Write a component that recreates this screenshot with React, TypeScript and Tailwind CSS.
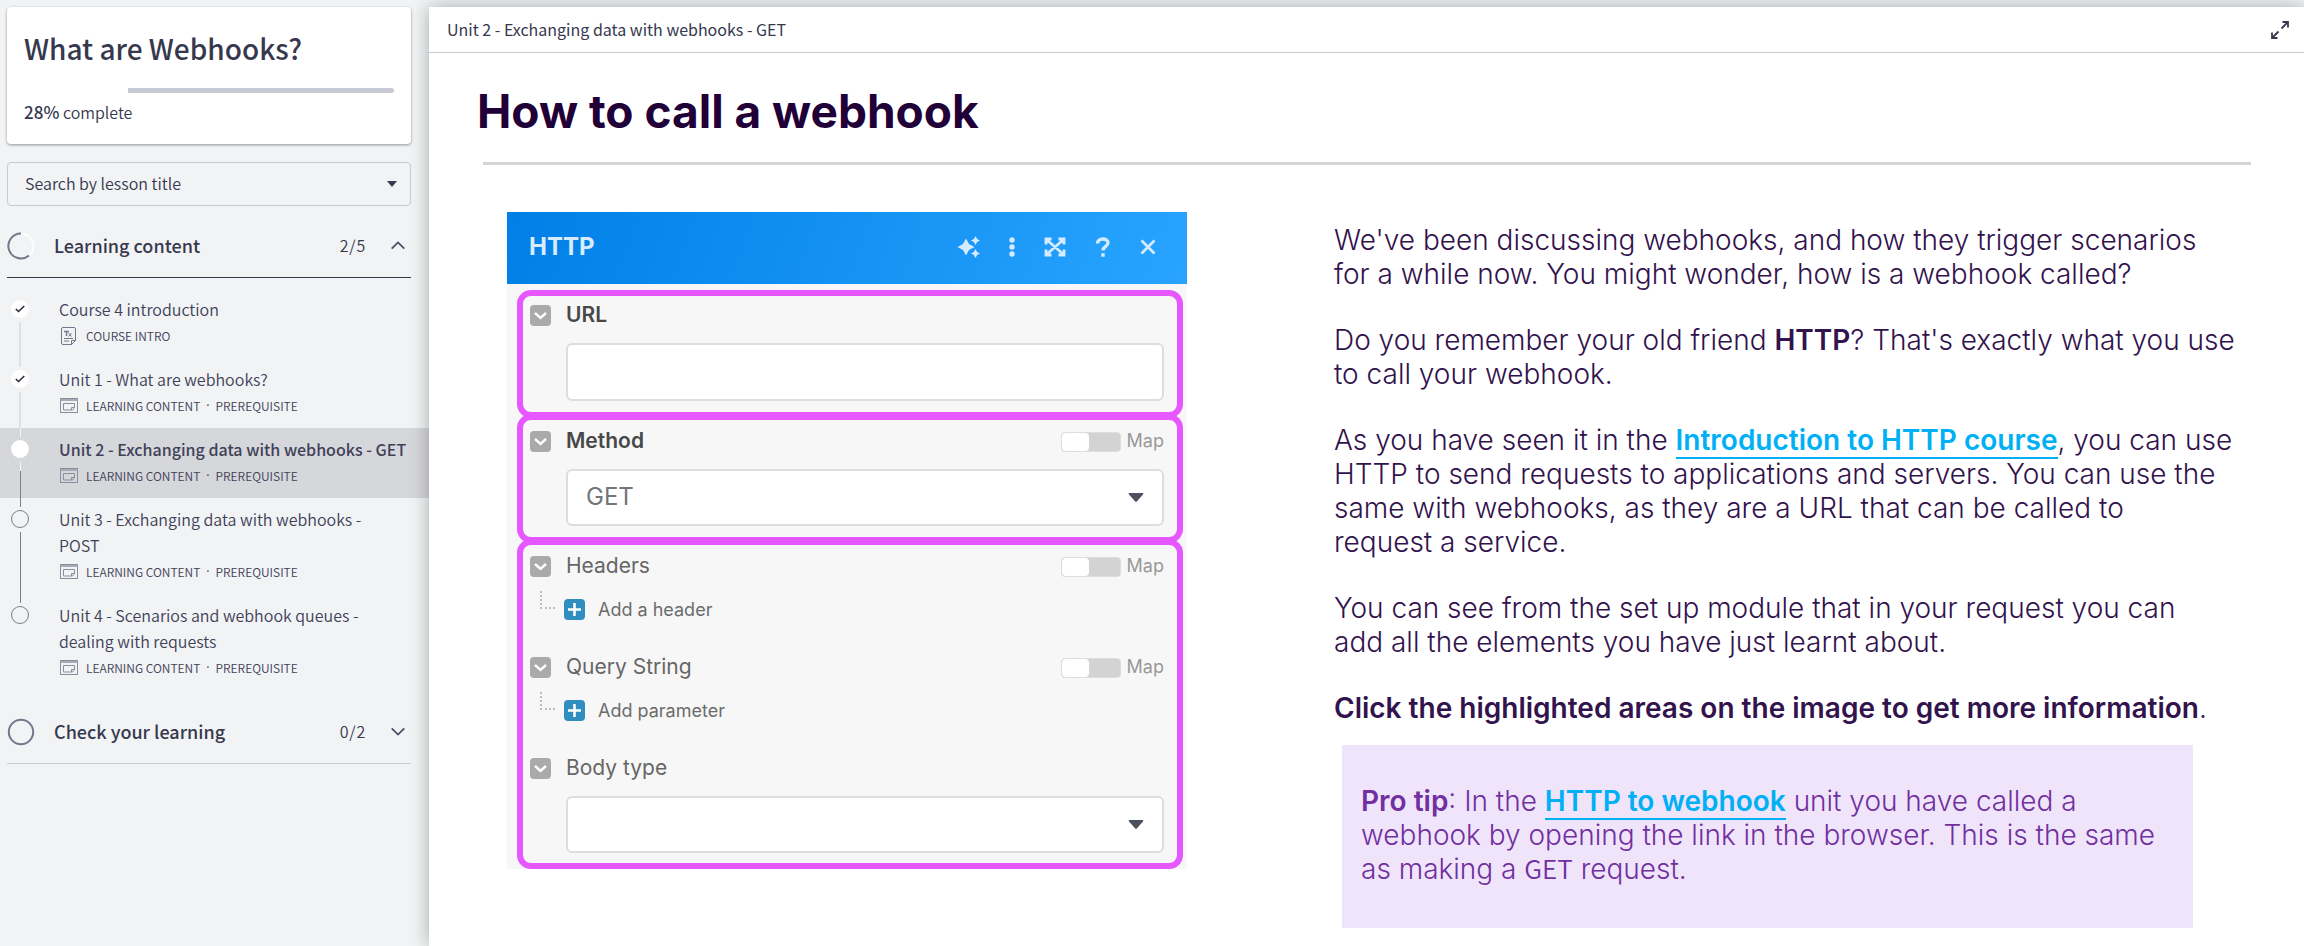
import React from "react";
import { clsx } from "clsx";

const sans = "font-['Noto_Sans_CJK_SC',sans-serif]";

type LessonState = "done" | "current" | "todo";

interface Lesson {
  title: string;
  tags: string[];
  icon: "text" | "slides";
  state: LessonState;
}

const lessons: Lesson[] = [
  { title: "Course 4 introduction", tags: ["COURSE INTRO"], icon: "text", state: "done" },
  { title: "Unit 1 - What are webhooks?", tags: ["LEARNING CONTENT", "PREREQUISITE"], icon: "slides", state: "done" },
  { title: "Unit 2 - Exchanging data with webhooks - GET", tags: ["LEARNING CONTENT", "PREREQUISITE"], icon: "slides", state: "current" },
  { title: "Unit 3 - Exchanging data with webhooks - POST", tags: ["LEARNING CONTENT", "PREREQUISITE"], icon: "slides", state: "todo" },
  { title: "Unit 4 - Scenarios and webhook queues - dealing with requests", tags: ["LEARNING CONTENT", "PREREQUISITE"], icon: "slides", state: "todo" },
];

function TextDocIcon() {
  return (
    <svg width="20" height="20" viewBox="0 0 20 20" fill="none" stroke="#74768b" aria-hidden="true">
      <path d="M4 1.500h11A1.500 1.500 0 0 1 16.500 3v11.500L12.500 18.500H4A1.500 1.500 0 0 1 2.500 17V3A1.500 1.500 0 0 1 4 1.500Z" />
      <path d="M12.500 18.500v-4h4M5 12.500h9M5 15h5" />
      <path d="M5 5.500h5M7.500 5.500V10" strokeWidth="1.400" />
      <path d="M9.500 7l3 3.500M12.500 7l-3 3.500" />
    </svg>
  );
}

function SlidesIcon() {
  return (
    <svg width="20" height="18" viewBox="0 0 20 18" fill="none" stroke="#8b8c9c" aria-hidden="true">
      <rect x="1.500" y="1.500" width="17" height="14" />
      <path d="M1.500 3h17" strokeWidth="2" stroke="#a9aab6" />
      <path d="M4.500 6.500h11v4l-2 2.500h-9ZM12.500 13v-2.500h3" />
    </svg>
  );
}

function Marker({ state }: { state: LessonState }) {
  if (state === "todo") {
    return <span className="size-[18px] shrink-0 rounded-full border border-[#7c7e90]" />;
  }
  return (
    <span className="flex size-[18px] shrink-0 items-center justify-center rounded-full bg-white">
      {state === "done" && (
        <svg width="10" height="8" viewBox="0 0 10 8" fill="none" stroke="#2b2c3a" strokeWidth="1.600" aria-hidden="true">
          <path d="M0.800 4L3.500 6.500L9.300 1" />
        </svg>
      )}
    </span>
  );
}

function LessonRow({ lesson, first, last }: { lesson: Lesson; first: boolean; last: boolean }) {
  const current = lesson.state === "current";
  return (
    <li className={clsx("flex", current && "bg-[#d6d7db]")}>
      <div className="ml-[10px] flex w-5 shrink-0 flex-col items-center">
        <span
          className={clsx(
            "h-[9px]",
            first ? "w-0" : lesson.state === "todo" ? "w-px bg-[#7c7e90]" : current ? "w-px bg-[#f4f4f6]" : "w-[2px] bg-[#dfe0e3]",
          )}
        />
        <span className="h-[3px]" />
        <Marker state={lesson.state} />
        <span className="h-1 shrink-0" />
        {current && <span className="h-[9px] w-px bg-[#f4f4f6]" />}
        <span className={clsx("flex-1", last ? "w-0" : lesson.state === "done" ? "w-[2px] bg-[#dfe0e3]" : "w-px bg-[#7c7e90]")} />
      </div>
      <a href="#lesson" className="block flex-1 pb-2 pl-[29px] pr-4 pt-2">
        <span className={clsx("block text-base leading-[26px] text-[#3f4158]", current ? "font-medium" : "font-[350]", lesson.state === "todo" && "pr-9")}>
          {lesson.title}
        </span>
        <span className="flex h-7 items-center text-xs text-[#3f4158]">
          {lesson.icon === "text" ? <TextDocIcon /> : <SlidesIcon />}
          {lesson.tags.map((tag, i) => (
            <React.Fragment key={tag}>
              {i > 0 && <span className="ml-[6px] -mr-[1px] font-['Noto_Sans',sans-serif]">·</span>}
              <span className="ml-[7px] font-[350]">{tag}</span>
            </React.Fragment>
          ))}
        </span>
      </a>
    </li>
  );
}

function SectionHeader({ title, count, open }: { title: string; count: string; open: boolean }) {
  return (
    <button
      type="button"
      aria-expanded={open}
      className={clsx("ml-[7px] mr-[18px] flex h-16 items-center border-b text-left text-[#36384e]", open ? "border-[#36384e]" : "border-[#c9cbd0]")}
    >
      <svg width="28" height="28" viewBox="0 0 28 28" fill="none" aria-hidden="true">
        {open ? (
          <>
            <path d="M14 1.500A12.500 12.500 0 0 1 22 23.500" stroke="#ffffff" strokeWidth="2" />
            <path d="M14 1.500A12.500 12.500 0 1 0 22 23.500" stroke="#74768b" strokeWidth="2" />
          </>
        ) : (
          <circle cx="14" cy="14" r="12.200" stroke="#74768b" strokeWidth="2" />
        )}
      </svg>
      <span className="ml-[19px] flex-1 pb-[2px] text-lg font-medium leading-6">{title}</span>
      <span className="pb-[2px] text-base font-[350] leading-6 tracking-wider">{count}</span>
      <svg className="ml-[25px] mr-[6px]" width="14" height="9" viewBox="0 0 14 9" fill="none" stroke="#4b4d62" strokeWidth="1.800" aria-hidden="true">
        <path d={open ? "M0.700 7.700L7 1.400l6.300 6.300" : "M0.700 1.300L7 7.600l6.300-6.300"} />
      </svg>
    </button>
  );
}

function Sidebar() {
  return (
    <aside className={clsx("flex w-[429px] shrink-0 flex-col pt-[7px] text-[#36384e]", sans)}>
      <div className="ml-[7px] mr-[18px] h-[137px] rounded bg-white px-[17px] pt-[21px] shadow-[0_1px_3px_rgba(0,0,0,0.4)]">
        <h1 className="text-[28px] font-medium leading-10">What are Webhooks?</h1>
        <div className="mt-5 flex h-[5px]" role="progressbar" aria-label="Course progress" aria-valuenow={28} aria-valuemin={0} aria-valuemax={100}>
          <span className="w-[28%]" />
          <span className="flex-1 rounded-r-full bg-[#c7cad5]" />
        </div>
        <p className="mt-[7px] text-base font-[350] leading-6">
          <span className="text-[17px] font-medium">28%</span> complete
        </p>
      </div>
      <div className="relative ml-[7px] mr-[18px] mt-[18px]">
        <select aria-label="Search by lesson title" className="h-11 w-full appearance-none rounded border border-[#c7cad5] bg-transparent px-[17px] pb-[2px] text-base font-[350]">
          <option>Search by lesson title</option>
        </select>
        <svg className="pointer-events-none absolute right-[14px] top-[19px]" width="10" height="6" viewBox="0 0 10 6" aria-hidden="true">
          <path d="M0 0h10L5 6Z" fill="#36384e" />
        </svg>
      </div>
      <nav aria-label="Lessons" className="mt-2 flex flex-col">
        <SectionHeader title="Learning content" count="2/5" open />
        <ul className="py-[10px]">
          {lessons.map((lesson, i) => (
            <LessonRow key={lesson.title} lesson={lesson} first={i === 0} last={i === lessons.length - 1} />
          ))}
        </ul>
        <SectionHeader title="Check your learning" count="0/2" open={false} />
      </nav>
    </aside>
  );
}

function CollapseBox() {
  return (
    <span className="flex size-[21px] shrink-0 items-center justify-center rounded bg-[#aaaaaa]">
      <svg width="13" height="8" viewBox="0 0 13 8" fill="none" stroke="#ffffff" strokeWidth="2.400" aria-hidden="true">
        <path d="M1 1l5.500 5L12 1" />
      </svg>
    </span>
  );
}

function FieldHead({ label, htmlFor, bold, map }: { label: string; htmlFor?: string; bold?: boolean; map?: boolean }) {
  const text = clsx("ml-[15px] flex-1 pb-[2px] text-[21px] leading-5", bold ? "font-semibold text-[#484848]" : "text-[#666666]");
  return (
    <div className="flex h-[21px] items-center">
      <CollapseBox />
      {htmlFor ? (
        <label htmlFor={htmlFor} className={text}>{label}</label>
      ) : (
        <span className={text}>{label}</span>
      )}
      {map && (
        <label className="flex items-center gap-[6px] text-lg leading-5 text-[#999999]">
          <input type="checkbox" className="peer sr-only" />
          <span className="flex h-5 w-[60px] rounded border border-[#dddddd] bg-[#d3d3d3]">
            <span className="w-[27px] rounded bg-white" />
          </span>
          <span className="pb-[2px]">Map</span>
        </label>
      )}
    </div>
  );
}

function SelectField({ id, options }: { id: string; options: string[] }) {
  return (
    <div className="relative ml-9 mt-[17px]">
      <select id={id} className="h-[57px] w-full appearance-none rounded-md border-2 border-[#dddddd] bg-white px-[18px] pb-[2px] text-2xl text-[#70757a]">
        {options.map((o) => (
          <option key={o}>{o}</option>
        ))}
      </select>
      <svg className="pointer-events-none absolute right-5 top-6" width="16" height="9" viewBox="0 0 16 9" aria-hidden="true">
        <path d="M1.500 0h13q1.500 0.500 0.500 1.600L9 8.300q-1 1-2 0L1 1.600Q0 0.500 1.500 0Z" fill="#4b525b" />
      </svg>
    </div>
  );
}

function AddRow({ label }: { label: string }) {
  return (
    <div className="mt-[22px] flex h-[21px] items-center pl-[10px]">
      <span className="-mt-5 h-[18px] w-[15px] border-b-2 border-l-2 border-dotted border-[#bdbdbd]" />
      <button type="button" className="ml-[9px] flex items-center gap-[13px] text-lg leading-5 text-[#6c6c6c]">
        <span className="flex size-[21px] items-center justify-center rounded bg-[#2f8dbf]">
          <svg width="13" height="13" viewBox="0 0 13 13" stroke="#ffffff" strokeWidth="2.600" aria-hidden="true">
            <path d="M6.500 0v13M0 6.500h13" />
          </svg>
        </span>
        {label}
      </button>
    </div>
  );
}

const area = "ml-[10px] mr-1 rounded-[14px] border-[6px] border-[#e657ff] pl-[7px] pr-[13px]";

function HttpModule() {
  return (
    <section aria-label="HTTP" className="w-[680px] shrink-0 font-[Inter,sans-serif]">
      <header className="flex h-[72px] items-center bg-linear-[110deg,#007fe6,#28a4ff] pl-[22px] pr-[31px]">
        <h3 className="flex-1 pb-[2px] text-2xl font-bold text-[#d9ecff]">HTTP</h3>
        <div className="flex items-center pb-[2px] text-[#d4ebff]">
          <button type="button" aria-label="Suggestions">
            <svg width="24" height="24" viewBox="0 0 24 24" fill="currentColor" aria-hidden="true">
              <path d="M9 3.500l3 5.500L17.500 12l-5.500 3L9 20.500l-3-5.500L0.500 12l5.500-3Z" />
              <path d="M18.500 1l1.600 2.900L23 5.500l-2.900 1.600L18.500 10l-1.600-2.900L14 5.500l2.900-1.600ZM18.500 14l1.600 2.900L23 18.500l-2.900 1.600L18.500 23l-1.600-2.900L14 18.500l2.900-1.600Z" />
            </svg>
          </button>
          <button type="button" aria-label="More" className="ml-[27px]">
            <svg width="8" height="20" viewBox="0 0 8 20" fill="currentColor" aria-hidden="true">
              <circle cx="4" cy="3" r="2.700" />
              <circle cx="4" cy="10" r="2.700" />
              <circle cx="4" cy="17" r="2.700" />
            </svg>
          </button>
          <button type="button" aria-label="Expand" className="ml-[28px]">
            <svg width="22" height="20" viewBox="0 0 22 20" fill="none" stroke="currentColor" strokeWidth="2.800" aria-hidden="true">
              <path d="M2 7.500V2h5.500M14.500 2H20v5.500M20 12.500V18h-5.500M7.500 18H2v-5.500M3 3l16 14M19 3L3 17" />
            </svg>
          </button>
          <button type="button" aria-label="Help" className="ml-[29px]">
            <svg width="16" height="20" viewBox="0 0 16 20" fill="none" stroke="currentColor" strokeWidth="3.400" aria-hidden="true">
              <path d="M2.500 6.500C2.500 0.500 13 0.500 13 6c0 3.500-5 3.500-5 7.500M8 16.200v3.600" />
            </svg>
          </button>
          <button type="button" aria-label="Close" className="ml-[29px]">
            <svg width="16" height="16" viewBox="0 0 16 16" fill="none" stroke="currentColor" strokeWidth="2.800" aria-hidden="true">
              <path d="M1.500 1.500l13 13M14.500 1.500l-13 13" />
            </svg>
          </button>
        </div>
      </header>
      <div className="bg-[#f7f7f7] pt-[6px]">
        <div className={clsx(area, "pb-[11px] pt-[9px]")}>
          <FieldHead label="URL" htmlFor="url" bold />
          <div className="ml-9 mt-[17px] flex">
            <input id="url" type="text" className="h-[58px] w-full rounded-md border-2 border-[#dddddd] bg-white px-[18px] text-2xl" />
          </div>
        </div>
        <div className={clsx(area, "-mt-1 pb-[11px] pt-[11px]")}>
          <FieldHead label="Method" htmlFor="method" bold map />
          <SelectField id="method" options={["GET", "POST", "PUT", "PATCH", "DELETE"]} />
        </div>
        <div className={clsx(area, "-mb-[3px] -mt-1 pb-[10px] pt-[11px]")}>
          <FieldHead label="Headers" map />
          <AddRow label="Add a header" />
          <div className="mt-[37px]">
            <FieldHead label="Query String" map />
          </div>
          <AddRow label="Add parameter" />
          <div className="mt-[37px]">
            <FieldHead label="Body type" htmlFor="body" />
          </div>
          <SelectField id="body" options={["", "Raw", "Multipart/form-data"]} />
        </div>
      </div>
    </section>
  );
}

const link = "border-b-2 border-[#00b0f5] font-semibold text-[#00b0f5]";

function Explanation() {
  return (
    <article className="min-w-0 flex-1 font-[Inter,sans-serif] text-[28px] font-light leading-[34px] text-[#32134d]">
      <div className="flex flex-col gap-8">
        <p>
          We've been discussing webhooks, and how they trigger scenarios
          <br />
          for a while now. You might wonder, how is a webhook called?
        </p>
        <p>
          Do you remember your old friend <b className="font-semibold">HTTP</b>? That's exactly what you use
          <br />
          to call your webhook.
        </p>
        <p>
          As you have seen it in the <a href="#http-course" className={link}>Introduction to HTTP course</a>, you can use
          <br />
          HTTP to send requests to applications and servers. You can use the
          <br />
          same with webhooks, as they are a URL that can be called to
          <br />
          request a service.
        </p>
        <p>
          You can see from the set up module that in your request you can
          <br />
          add all the elements you have just learnt about.
        </p>
        <p>
          <b className="font-semibold">Click the highlighted areas on the image to get more information</b>.
        </p>
      </div>
      <aside className="ml-2 mr-[58px] mt-5 bg-[#f0e4fb] pb-[42px] pl-[19px] pt-[39px] text-[#7030a0]">
        <b className="font-semibold">Pro tip</b>: In the <a href="#http-to-webhook" className={link}>HTTP to webhook</a> unit you have called a
        <br />
        webhook by opening the link in the browser. This is the same
        <br />
        as making a <code className="font-['Noto_Sans_CJK_SC',sans-serif] text-[26px] font-[350] leading-6">GET</code> request.
      </aside>
    </article>
  );
}

export default function App() {
  return (
    <div className="flex min-h-screen overflow-hidden bg-[#f1f3f5]">
      <Sidebar />
      <main className="z-10 mt-[7px] min-w-0 flex-1 bg-white shadow-[0_0_18px_rgba(0,0,0,0.3)]">
        <header className={clsx("flex h-[46px] items-center justify-between border-b border-[#c7cad5] pl-[18px] pr-[14px]", sans)}>
          <h2 className="pb-[2px] text-base leading-6 text-[#36384e]">Unit 2 - Exchanging data with webhooks - GET</h2>
          <button type="button" aria-label="Full screen">
            <svg width="20" height="20" viewBox="0 0 20 20" fill="none" stroke="#36384e" strokeWidth="1.800" aria-hidden="true">
              <path d="M11.500 8.500l6-6M12.500 2h5.500v5.500M8.500 11.500l-6 6M2 12.500V18h5.500" />
            </svg>
          </button>
        </header>
        <div className="pl-[54px] pr-[53px]">
          <h2 className="-ml-[6px] pt-7 font-[Inter,sans-serif] text-[46px] font-bold leading-[60px] text-[#210038]">How to call a webhook</h2>
          <hr className="mt-[21px] border-t-[3px] border-[#d8d3d6]" />
          <div className="mt-[47px] flex gap-[147px] pl-6">
            <HttpModule />
            <div className="flex min-w-0 flex-1 pt-[11px]">
              <Explanation />
            </div>
          </div>
        </div>
      </main>
    </div>
  );
}
